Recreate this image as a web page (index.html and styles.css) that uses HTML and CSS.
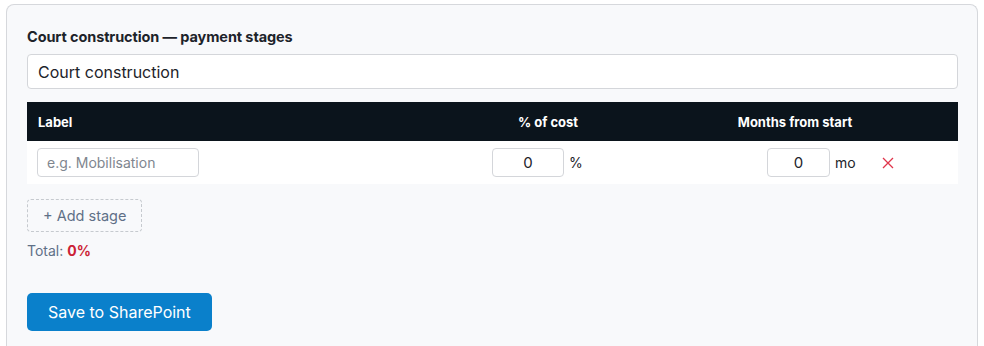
FILE: index.html
```html
<!DOCTYPE html>
<html>
<head>
  <meta name="viewport" content="width=device-width, initial-scale=1.0">
  <title>Payment stages</title>
  <link rel="stylesheet" href="styles.css">
</head>
<body>
  <div class="card">
    <label class="field-label" for="projectName">Court construction — payment stages</label>
    <input id="projectName" class="text-input" type="text" value="Court construction">

    <div class="stages">
      <div class="stages-head">
        <div class="col-label">Label</div>
        <div class="col-pct">% of cost</div>
        <div class="col-months">Months from start</div>
        <div></div>
      </div>
      <div class="stage-row">
        <div class="col-label">
          <input class="stage-name" type="text" placeholder="e.g. Mobilisation">
        </div>
        <div class="col-pct cell-pct">
          <input class="num-input pct-input" type="text" value="0"><span class="unit">%</span>
        </div>
        <div class="col-months cell-months">
          <input class="num-input months-input" type="text" value="0"><span class="unit">mo</span>
        </div>
        <div class="cell-remove">
          <button class="remove-btn" title="Remove stage">
            <svg width="12" height="12" viewBox="0 0 12 12"><path d="M1 1L11 11M11 1L1 11" stroke="#e0354b" stroke-width="1.3" fill="none"/></svg>
          </button>
        </div>
      </div>
    </div>

    <button class="add-btn">+ Add stage</button>
    <div class="total">Total: <strong>0%</strong></div>

    <button class="save-btn">Save to SharePoint</button>
  </div>
</body>
</html>
```

FILE: styles.css
```css
body {
  margin: 0;
  padding: 4px 6px 0 6px;
  background-color: #fff;
  font-family: Inter, "Noto Sans", sans-serif;
  color: #1d232a;
}

.card {
  background-color: #f8f9fb;
  border: 1px solid #d6d8dc;
  border-bottom: none;
  border-radius: 8px 8px 0 0;
  padding: 23px 19px 15px 20px;
  display: flex;
  flex-direction: column;
  align-items: flex-start;
}

.field-label {
  font-size: 14.5px;
  font-weight: 700;
  color: #1d232a;
  margin-bottom: 9px;
  letter-spacing: -0.1px;
}

.text-input {
  box-sizing: border-box;
  width: 100%;
  height: 35px;
  border: 1px solid #d4d6da;
  border-radius: 4px;
  background-color: #fff;
  padding: 0 10px;
  font-family: inherit;
  font-size: 16px;
  color: #1d232a;
}

.stages {
  width: 100%;
  margin-top: 13px;
}

.stages-head,
.stage-row {
  display: grid;
  grid-template-columns: 350px 342px 152px 1fr;
  align-items: center;
}

.stages-head {
  background-color: #0b141c;
  color: #fff;
  font-size: 13px;
  font-weight: 700;
  height: 39px;
}

.stages-head .col-label {
  padding-left: 11px;
}

.stages-head .col-pct,
.stages-head .col-months {
  text-align: center;
}

.stage-row {
  background-color: #fff;
  height: 43px;
}

.stage-row .col-label {
  padding-left: 10px;
}

.stage-name {
  box-sizing: border-box;
  width: 162px;
  height: 29px;
  border: 1px solid #d4d6da;
  border-radius: 4px;
  padding: 0 9px;
  font-family: inherit;
  font-size: 14px;
  color: #1d232a;
}

.stage-name::placeholder {
  color: #80868f;
}

.cell-pct {
  display: flex;
  align-items: center;
  padding-left: 115px;
}

.cell-months {
  display: flex;
  align-items: center;
  padding-left: 48px;
}

.num-input {
  box-sizing: border-box;
  height: 29px;
  border: 1px solid #d4d6da;
  border-radius: 4px;
  text-align: center;
  font-family: inherit;
  font-size: 15px;
  color: #1d232a;
  padding: 0 4px;
}

.pct-input {
  width: 72px;
}

.months-input {
  width: 63px;
}

.unit {
  font-size: 14px;
  color: #1d232a;
  margin-left: 5px;
}

.cell-remove {
  padding-left: 11px;
}

.remove-btn {
  background: none;
  border: none;
  padding: 0;
  display: flex;
  cursor: pointer;
}

.add-btn {
  margin-top: 15px;
  height: 33px;
  padding: 0 15px;
  border: 1px dashed #c6cacf;
  border-radius: 4px;
  background: transparent;
  color: #5f7087;
  font-family: inherit;
  font-size: 14.5px;
}

.total {
  margin-top: 10px;
  font-size: 14px;
  color: #5f7087;
}

.total strong {
  color: #cc1f36;
}

.save-btn {
  margin-top: 34px;
  height: 38px;
  padding: 0 21px;
  border: none;
  border-radius: 5px;
  background-color: #0a80cb;
  color: #fff;
  font-family: inherit;
  font-size: 16px;
}
```
